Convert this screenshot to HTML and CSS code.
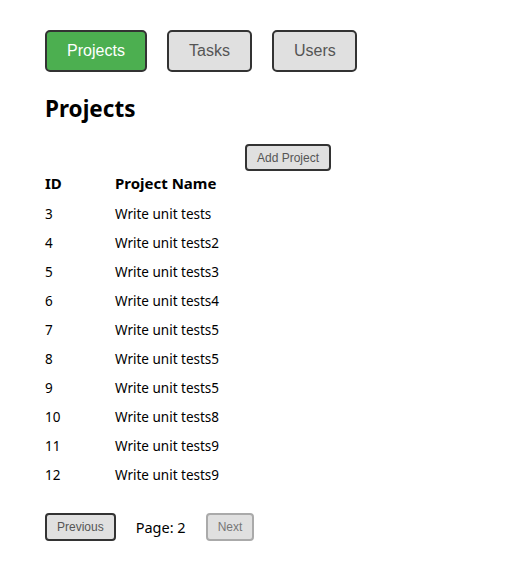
FILE: index.html
```html
<!DOCTYPE html>
<html>
<head>
<meta charset="utf-8">
<link rel="stylesheet" href="styles.css">
</head>
<body>
<div class="app">
  <nav class="nav">
    <button class="nav-btn active">Projects</button>
    <button class="nav-btn">Tasks</button>
    <button class="nav-btn">Users</button>
  </nav>
  <h1 class="title">Projects</h1>
  <div class="panel">
    <div class="toolbar"><button class="small-btn">Add Project</button></div>
    <table class="grid">
      <thead>
        <tr><th class="c-id">ID</th><th>Project Name</th></tr>
      </thead>
      <tbody>
        <tr><td>3</td><td>Write unit tests</td></tr>
        <tr><td>4</td><td>Write unit tests2</td></tr>
        <tr><td>5</td><td>Write unit tests3</td></tr>
        <tr><td>6</td><td>Write unit tests4</td></tr>
        <tr><td>7</td><td>Write unit tests5</td></tr>
        <tr><td>8</td><td>Write unit tests5</td></tr>
        <tr><td>9</td><td>Write unit tests5</td></tr>
        <tr><td>10</td><td>Write unit tests8</td></tr>
        <tr><td>11</td><td>Write unit tests9</td></tr>
        <tr><td>12</td><td>Write unit tests9</td></tr>
      </tbody>
    </table>
  </div>
  <div class="pager">
    <button class="small-btn">Previous</button>
    <span class="page">Page: 2</span>
    <button class="small-btn disabled">Next</button>
  </div>
</div>
</body>
</html>
```
FILE: styles.css
```css
html, body { margin: 0; padding: 0; background: #fff; }
body { font-family: "Noto Sans", "Open Sans", sans-serif; color: #000; }
.app { padding: 30px 45px; }
.nav { display: flex; gap: 20px; }
.nav-btn {
  font-family: "Liberation Sans", Arial, sans-serif;
  font-size: 16px;
  height: 42px;
  padding: 0 20px;
  border: 2px solid #333;
  border-radius: 5px;
  background: #e0e0e0;
  color: #555;
}
.nav-btn:first-child { width: 102px; }
.nav-btn:not(:first-child) { width: 85px; }
.nav-btn.active { background: #4caf50; color: #fff; }
.title { font-size: 22.5px; font-weight: 700; margin: 22px 0 0; line-height: 30px; }
.panel { width: 286px; margin-top: 20px; }
.toolbar { display: flex; justify-content: flex-end; }
.small-btn {
  font-family: "Liberation Sans", Arial, sans-serif;
  font-size: 12px;
  height: 27px;
  padding: 0 10px;
  border: 2px solid #333;
  border-radius: 4px;
  background: #e0e0e0;
  color: #555;
}
.small-btn.disabled { border-color: #aaa; color: #777; }
.grid { border-collapse: collapse; margin-top: 0; font-size: 13.5px; }
.grid th { text-align: left; font-weight: 700; font-size: 15px; height: 24px; padding: 0 0 4px; }
.grid td { height: 29px; padding: 0; }
.grid .c-id { width: 70px; }
.pager { display: flex; align-items: center; gap: 20px; margin-top: 24px; font-size: 14.5px; }
.pager .small-btn { height: 28px; }
```
